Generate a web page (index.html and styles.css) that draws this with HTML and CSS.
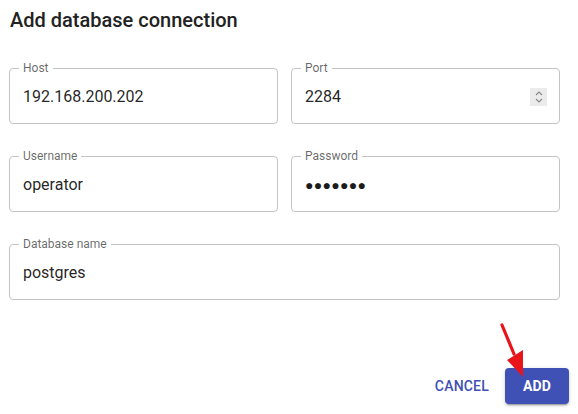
FILE: index.html
```html
<!DOCTYPE html>
<html>
<head>
<meta charset="utf-8">
<link rel="stylesheet" href="styles.css">
</head>
<body>
<div class="dialog">
  <h2 class="title">Add database connection</h2>
  <div class="fields">
    <div class="field">
      <span class="label">Host</span>
      <span class="value">192.168.200.202</span>
    </div>
    <div class="field">
      <span class="label">Port</span>
      <span class="value">2284</span>
      <span class="spin">
        <svg width="10" height="14" viewBox="0 0 10 14"><path d="M2 5 L5 2 L8 5 M2 9 L5 12 L8 9" fill="none" stroke="#8a8a8a" stroke-width="1.2"/></svg>
      </span>
    </div>
    <div class="field">
      <span class="label">Username</span>
      <span class="value">operator</span>
    </div>
    <div class="field">
      <span class="label">Password</span>
      <span class="value dots">●●●●●●●</span>
    </div>
    <div class="field wide">
      <span class="label">Database name</span>
      <span class="value">postgres</span>
    </div>
  </div>
  <div class="actions">
    <button class="btn text">Cancel</button>
    <button class="btn contained">Add</button>
  </div>
  <svg class="arrow" width="578" height="414" viewBox="0 0 578 414">
    <line x1="502" y1="325" x2="514" y2="354" stroke="#e8141a" stroke-width="3.2" stroke-linecap="round"/>
    <polygon points="507,360 523,350 523,377" fill="#e8141a"/>
  </svg>
</div>
</body>
</html>
```
FILE: styles.css
```css
* { box-sizing: border-box; }
html, body { margin: 0; padding: 0; background: #fff; }
body { font-family: Roboto, "Noto Sans", Arial, sans-serif; color: rgba(0,0,0,0.87); }
.dialog { position: relative; width: 578px; height: 414px; padding: 0 9px 0 9px; }
.title { margin: 0; padding: 5px 1px 0; font-size: 20px; font-weight: 500; line-height: 30px; letter-spacing: 0; color: #222; }
.fields { display: grid; grid-template-columns: 269px 269px; column-gap: 13px; row-gap: 32px; margin-top: 33px; }
.field { position: relative; height: 56px; border: 1px solid #c4c4c4; border-radius: 4px; display: flex; align-items: center; padding: 2px 13px 0; }
.field.wide { grid-column: 1 / 3; width: 551px; }
.label { position: absolute; top: -8px; left: 9px; padding: 0 4px; background: #fff; font-size: 12px; line-height: 14px; color: rgba(0,0,0,0.6); }
.value { font-size: 16px; line-height: 20px; flex: 1; }
.dots { font-size: 14px; letter-spacing: 0.3px; color: #1c1c1c; }
.spin { width: 17px; height: 18px; background: #ebebeb; display: flex; align-items: center; justify-content: center; margin-right: -1px; }
.actions { display: flex; justify-content: flex-end; align-items: center; gap: 8px; margin-top: 68px; padding-right: 0; }
.btn { font-family: Roboto, Arial, sans-serif; font-size: 14px; font-weight: 500; text-transform: uppercase; letter-spacing: 0.2px; border: none; border-radius: 4px; height: 36px; cursor: pointer; }
.btn.text { background: transparent; color: #3f51b5; padding: 0 8px; }
.btn.contained { background: #3f51b5; color: #fff; width: 64px; font-weight: 700; box-shadow: 0 3px 1px -2px rgba(0,0,0,0.2), 0 2px 2px 0 rgba(0,0,0,0.14), 0 1px 5px 0 rgba(0,0,0,0.12); }
.arrow { position: absolute; left: 0; top: 0; pointer-events: none; }
```
